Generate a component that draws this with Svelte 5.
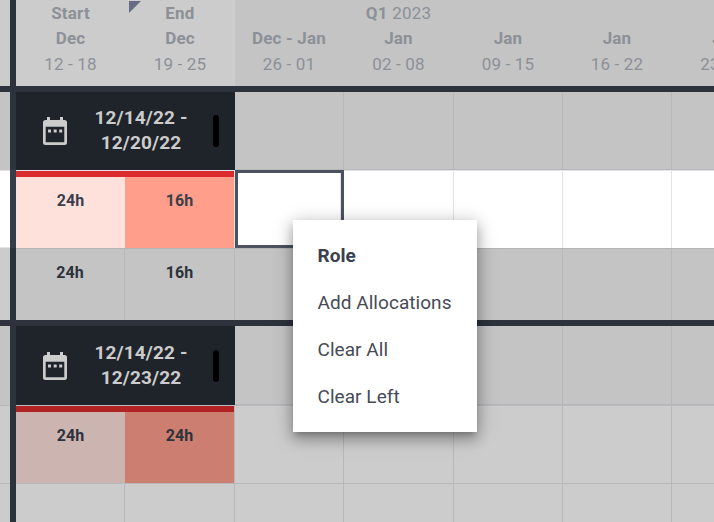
<script lang="ts">
    const weeks = [
        { title: 'Start', month: 'Dec', days: '12 - 18' },
        { title: 'End', month: 'Dec', days: '19 - 25' },
        { title: '', month: 'Dec - Jan', days: '26 - 01' },
        { title: 'Q1', year: '2023', month: 'Jan', days: '02 - 08' },
        { title: '', month: 'Jan', days: '09 - 15' },
        { title: '', month: 'Jan', days: '16 - 22' },
        { title: '', month: 'Jan', days: '23 - 29' },
    ];

    const emptyWeeks = [2, 3, 4, 5, 6];
    const actions = ['Add Allocations', 'Clear All', 'Clear Left'];
</script>

{#snippet phase(from: string, to: string)}
    <div class="phase">
        <svg class="calendar" width="24" height="28" viewBox="0 0 24 28">
            <path
                fill="#cccccc"
                fill-rule="evenodd"
                d="M4 0h3v3h10V0h3v3h1.500a2.500 2.500 0 0 1 2.500 2.500v20a2.500 2.500 0 0 1-2.500 2.500h-19A2.500 2.500 0 0 1 0 25.500v-20A2.500 2.500 0 0 1 2.500 3H4zM2.700 9.700v15.600h18.600V9.700z"
            />
            <path fill="#cccccc" d="M5 12.500h3v3H5zM10.700 12.500h3v3h-3zM16.200 12.500h3v3h-3z" />
        </svg>
        <div class="dates">{from} -<br />{to}</div>
        <div class="handle"></div>
    </div>
{/snippet}

<div class="planner">
    <div class="row header">
        <div class="gutter"></div>
        <div class="cells">
            {#each weeks as week, i}
                <div class="week" class:assigned={i < 2}>
                    <div class="line"><b>{week.title}</b> {week.year ?? ''}</div>
                    <div class="line"><b>{week.month}</b></div>
                    <div class="line days">{week.days}</div>
                    {#if i === 1}
                        <span class="flag"></span>
                    {/if}
                </div>
            {/each}
        </div>
    </div>

    <div class="divider"></div>

    <div class="row phase-row">
        <div class="gutter"></div>
        <div class="cells">
            {@render phase('12/14/22', '12/20/22')}
            {#each emptyWeeks as _}<div class="cell"></div>{/each}
        </div>
    </div>

    <div class="row role-row active">
        <div class="gutter"></div>
        <div class="cells">
            <div class="cell hours light">24h</div>
            <div class="cell hours strong">16h</div>
            {#each emptyWeeks as week}
                <div class="cell" class:selected={week === 2}></div>
            {/each}
        </div>
    </div>

    <div class="row total-row">
        <div class="gutter"></div>
        <div class="cells">
            <div class="cell hours">24h</div>
            <div class="cell hours">16h</div>
            {#each emptyWeeks as _}<div class="cell"></div>{/each}
        </div>
    </div>

    <div class="divider"></div>

    <div class="row phase-row second">
        <div class="gutter"></div>
        <div class="cells">
            {@render phase('12/14/22', '12/23/22')}
            {#each emptyWeeks as _}<div class="cell"></div>{/each}
        </div>
    </div>

    <div class="row role-row dimmed">
        <div class="gutter"></div>
        <div class="cells">
            <div class="cell hours light">24h</div>
            <div class="cell hours strong">24h</div>
            {#each emptyWeeks as _}<div class="cell"></div>{/each}
        </div>
    </div>

    <div class="row last-row">
        <div class="gutter"></div>
        <div class="cells">
            {#each weeks as _}<div class="cell"></div>{/each}
        </div>
    </div>

    <div class="menu">
        <div class="menu-title">Role</div>
        {#each actions as action}
            <div class="menu-item">{action}</div>
        {/each}
    </div>
</div>

<style>
    :global(body) {
        overflow: hidden;
    }

    .planner {
        position: relative;
        width: 714px;
        height: 522px;
        overflow: hidden;
        background: #cccccc;
        color: #2d323b;
        font-family: Roboto, sans-serif;
    }

    .row {
        display: flex;
    }

    .gutter {
        box-sizing: border-box;
        flex: none;
        width: 16px;
        border-right: 6px solid #2d323c;
    }

    .cells {
        display: grid;
        grid-template-columns: 109px 110px 109px 110px 109px 109px 110px;
        flex: none;
    }

    .divider {
        height: 6px;
        background: #2d323c;
    }

    .header {
        height: 86px;
    }

    .week {
        position: relative;
        box-sizing: border-box;
        padding: 1px 1px 0 0;
        background: #c4c4c4;
        color: #8c9097;
        font-size: 17px;
        letter-spacing: 0.2px;
        line-height: 25px;
        text-align: center;
        white-space: nowrap;
    }

    .week.assigned {
        padding-right: 0;
        background: #cccccc;
    }

    .line {
        height: 25px;
    }

    .days {
        padding-top: 1px;
    }

    .flag {
        position: absolute;
        top: 1px;
        left: 4px;
        width: 12px;
        height: 12px;
        background: #676d85;
        clip-path: polygon(0 0, 100% 0, 0 100%);
    }

    .cell {
        box-sizing: border-box;
        border-right: 1px solid #b7b8bb;
    }

    .phase-row {
        height: 78px;
        background: #c4c4c4;
    }

    .phase-row .cell {
        border-bottom: 1px solid #b5b6ba;
    }

    .phase-row.second {
        height: 79px;
    }

    .phase {
        box-sizing: border-box;
        grid-column: span 2;
        display: flex;
        align-items: center;
        padding: 0 16px 0 27px;
        background: #1f232a;
    }

    .calendar {
        flex: none;
    }

    .dates {
        flex: 1;
        padding: 0 0 2px 2px;
        color: #cccccc;
        font-size: 19px;
        font-weight: 700;
        letter-spacing: 0.15px;
        line-height: 25px;
        text-align: center;
    }

    .handle {
        width: 6px;
        height: 32px;
        border-radius: 3px;
        background: #000000;
    }

    .role-row {
        height: 78px;
    }

    .role-row .cell {
        border-top: 1px solid #b9babf;
    }

    .active {
        background: #ffffff;
    }

    .active .gutter {
        border-right-color: #363d4a;
        box-shadow: inset 0 1px #e2e2e8, inset 0 -1px #e2e2e8;
    }

    .active .cell {
        border-color: #e2e2e7;
    }

    .hours {
        padding-top: 14px;
        font-size: 16px;
        font-weight: 700;
        letter-spacing: 0.1px;
        line-height: 20px;
        text-align: center;
    }

    .role-row .hours {
        box-shadow: inset 0 6px #dc2b2e;
        padding-top: 20px;
    }

    .role-row .light {
        border-right: 0;
    }

    .active .hours {
        color: #3a404b;
    }

    .active .light {
        background: #ffe1dc;
    }

    .active .strong {
        background: #ff9f8b;
    }

    .active .selected {
        border: 3px solid #4c525f;
        box-shadow: inset -1px 0 #e2e2e7;
    }

    .dimmed .hours {
        box-shadow: inset 0 6px #b12223;
    }

    .dimmed .light {
        background: #ccb4b0;
    }

    .dimmed .strong {
        background: #cc7f70;
    }

    .total-row {
        height: 72px;
    }

    .total-row .cell {
        border-top: 1px solid #b3b4b7;
        background: #c4c4c4;
    }

    .dimmed .gutter,
    .last-row .gutter {
        box-shadow: inset 0 1px #b7b8bb;
    }

    .last-row {
        height: 39px;
    }

    .last-row .cell {
        border-top: 1px solid #b7b8bb;
    }

    .menu {
        position: absolute;
        top: 220px;
        left: 293px;
        box-sizing: border-box;
        width: 184px;
        height: 212px;
        padding: 12px 24.500px;
        background: #ffffff;
        box-shadow:
            0 5px 5px -3px rgba(0, 0, 0, 0.2),
            0 8px 10px 1px rgba(0, 0, 0, 0.14),
            0 3px 14px 2px rgba(0, 0, 0, 0.12),
            0 4px 22px rgba(0, 0, 0, 0.16);
        color: #454a57;
        font-size: 19px;
        letter-spacing: 0.05px;
        line-height: 47px;
        white-space: nowrap;
    }

    .menu-title {
        color: #3a404d;
        font-weight: 700;
    }
</style>
